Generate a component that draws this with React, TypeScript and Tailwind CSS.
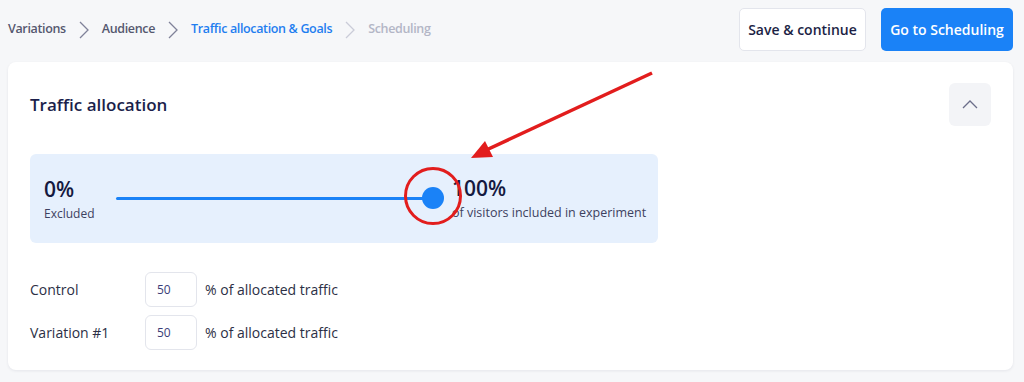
const font = { fontFamily: '"Open Sans", "Noto Sans", sans-serif' }

const steps = [
  { label: 'Variations', state: 'done' },
  { label: 'Audience', state: 'done' },
  { label: 'Traffic allocation & Goals', state: 'active' },
  { label: 'Scheduling', state: 'todo' },
]

const Chevron = ({ light }: { light?: boolean }) => (
  <svg width="10" height="18" viewBox="0 0 10 18" className="mx-[13px]">
    <polyline
      points="1,1 9,9 1,17"
      fill="none"
      stroke={light ? '#caccd8' : '#7f8299'}
      strokeWidth="1.3"
    />
  </svg>
)

const Breadcrumb = () => (
  <nav className="flex items-center text-[12.5px] font-semibold tracking-[-0.35px]">
    {steps.map((s, i) => (
      <div key={s.label} className="flex items-center">
        <span
          className={
            s.state === 'active'
              ? 'text-[#1f7ef0]'
              : s.state === 'todo'
                ? 'text-[#b3b6c6]'
                : 'text-[#55586f]'
          }
        >
          {s.label}
        </span>
        {i < steps.length - 1 && <Chevron light={i === 2} />}
      </div>
    ))}
  </nav>
)

const AllocationRow = ({ label, value }: { label: string; value: number }) => (
  <div className="flex items-center">
    <span className="w-[115px] text-[14px] text-[#2c2f45]">{label}</span>
    <input
      readOnly
      value={value}
      className="w-[52px] h-[35px] rounded-md border border-[#e3e5ec] bg-white pl-[11px] text-[12px] text-[#3a3e78] outline-none"
    />
    <span className="ml-2 text-[14px] text-[#2c2f45]">% of allocated traffic</span>
  </div>
)

export default function App() {
  return (
    <div className="relative h-[382px] w-full overflow-hidden bg-[#f6f7f9]" style={font}>
      {/* top bar */}
      <div className="flex items-center justify-between pl-2 pr-[11px] pt-2">
        <Breadcrumb />
        <div className="flex gap-[15px]">
          <button className="h-[43px] w-[127px] rounded-[5px] border border-[#e3e5ec] bg-white text-[14px] font-semibold text-[#1c1f45]">
            Save &amp; continue
          </button>
          <button className="h-[43px] w-[132px] rounded-[5px] bg-[#1a82f7] text-[14px] font-semibold text-white">
            Go to Scheduling
          </button>
        </div>
      </div>

      {/* card */}
      <div className="ml-2 mr-[11px] mt-[11px] rounded-lg bg-white px-[22px] pb-5 pt-[21px] shadow-[0_1px_3px_rgba(20,30,60,0.08)]">
        <div className="flex items-center justify-between">
          <h2 className="text-[17px] font-semibold text-[#1b1f4b]">Traffic allocation</h2>
          <button className="flex h-[43px] w-[42px] items-center justify-center rounded-md bg-[#f3f4f7]">
            <svg width="16" height="9" viewBox="0 0 16 9">
              <polyline points="1,8 8,1 15,8" fill="none" stroke="#6b6e8a" strokeWidth="1.3" />
            </svg>
          </button>
        </div>

        <div className="mt-[28px] flex h-[89px] w-[628px] items-center rounded-md bg-[#e6f0fd] pl-[14px]">
          <div className="w-[72px] shrink-0">
            <div className="text-[21px] font-semibold leading-7 text-[#15193f]">0%</div>
            <div className="mt-[2px] text-[12px] text-[#3d4160]">Excluded</div>
          </div>
          <div className="relative mt-[-1px] h-[3px] w-[317px] shrink-0 rounded-full bg-[#1a82f7]">
            <div className="absolute right-[-11px] top-[-10px] h-[22px] w-[22px] rounded-full bg-[#1a82f7]" />
          </div>
          <div className="ml-[19px] whitespace-nowrap">
            <div className="text-[21px] font-semibold leading-7 text-[#15193f]">100%</div>
            <div className="mt-[2px] text-[12.5px] text-[#3d4160]">of visitors included in experiment</div>
          </div>
        </div>

        <div className="mt-[29px] flex flex-col gap-2">
          <AllocationRow label="Control" value={50} />
          <AllocationRow label="Variation #1" value={50} />
        </div>
      </div>

      {/* annotation overlay */}
      <svg className="pointer-events-none absolute inset-0" width="1024" height="382">
        <line x1="652" y1="73" x2="482" y2="152" stroke="#e21d1d" strokeWidth="3.5" />
        <polygon points="471,158 485,141 493,157" fill="#e21d1d" />
        <circle cx="433" cy="196" r="27.5" fill="none" stroke="#e21d1d" strokeWidth="3" />
      </svg>
    </div>
  )
}
